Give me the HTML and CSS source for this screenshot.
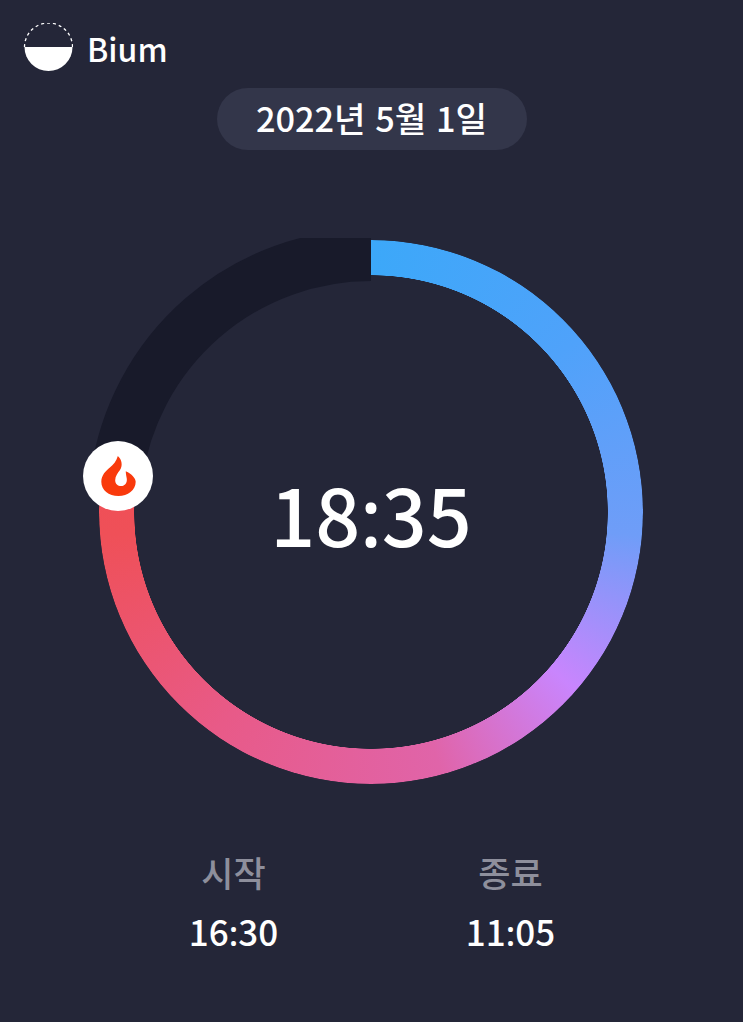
FILE: index.html
```html
<!DOCTYPE html>
<html lang="ko">
<head>
  <meta charset="UTF-8" />
  <meta name="viewport" content="width=device-width, initial-scale=1.0" />
  <title>Bium</title>
  <link rel="stylesheet" href="styles.css">
</head>
<body>
  <header class="brand">
    <svg class="brand-icon" viewBox="0 0 50 50" width="50" height="50">
      <path d="M1.500 24 A24 24 0 0 1 49.500 24" fill="none" stroke="#fff" stroke-width="1.300" stroke-dasharray="3 3" />
      <path d="M1.500 24 H49.500 A24 24 0 0 1 1.500 24 Z" fill="#fff" />
    </svg>
    <span class="brand-name">Bium</span>
  </header>

  <div class="date-row">
    <div class="date-pill">2022년 5월 1일</div>
  </div>

  <div class="dial">
    <svg class="dial-track" viewBox="-20 -2 300 300" width="300" height="300">
      <path d="M17.500 236 A257 257 0 0 1 272 15" fill="none" stroke="#181a2a" stroke-width="52" />
    </svg>
    <div class="dial-ring"></div>
    <div class="dial-time"><span>18<span class="colon">:</span>35</span></div>
    <div class="dial-knob">
      <svg viewBox="18 27 104 121" width="35" height="40">
        <path fill="#f93a0c" d="M68 27 C80 38 84 56 74 70 C68 78 60 88 60 100 C60 111 68 118 78 118 C89 118 97 108 95 95 C94 88 92 80 92 73 C110 80 122 95 122 105 C122 130 98 148 70 148 C40 148 18 130 18 105 C18 85 32 72 44 62 C54 54 64 42 68 27 Z" />
      </svg>
    </div>
  </div>

  <div class="times">
    <div class="time-col">
      <div class="time-label">시작</div>
      <div class="time-value">16<span class="colon">:</span>30</div>
    </div>
    <div class="time-col">
      <div class="time-label">종료</div>
      <div class="time-value">11<span class="colon">:</span>05</div>
    </div>
  </div>
</body>
</html>
```

FILE: styles.css
```css
html, body { height: 100%; }
body {
  margin: 0;
  overflow: hidden;
  background: #242638;
  color: #fff;
  font-family: "Noto Sans CJK KR", "Noto Sans", sans-serif;
}

/* the CJK font lifts a colon between digits, the latin one doesn't */
.colon { font-family: "Noto Sans", sans-serif; }

.brand {
  display: flex;
  align-items: center;
  gap: 14px;
  padding: 23px 0 0 23px;
  height: 50px;
}
.brand-name { font-size: 32px; font-weight: 500; }

.date-row {
  display: flex;
  justify-content: center;
  margin-top: 15px;
}
.date-pill {
  width: 310px;
  height: 62px;
  line-height: 59px;
  border-radius: 31px;
  background: #33364a;
  font-size: 34.300px;
  font-weight: 500;
  text-align: center;
}

.dial {
  position: relative;
  width: 544px;
  height: 544px;
  margin: 90px 0 0 99px;
}
.dial-ring {
  position: absolute;
  inset: 0;
  border-radius: 50%;
  background: conic-gradient(#3ca8f9 0deg, #4fa2fa 50deg, #6f9df8 95deg, #c985fd 131deg, #e064a9 165deg, #e85a88 215deg, #ef5058 265deg, #f04f56 278deg, transparent 278deg);
  -webkit-mask: radial-gradient(circle, transparent 236.500px, #000 237px);
  mask: radial-gradient(circle, transparent 236.500px, #000 237px);
}
.dial-track {
  position: absolute;
  left: -20px;
  top: -2px;
}
.dial-time {
  position: absolute;
  inset: 0;
  display: flex;
  align-items: center;
  justify-content: center;
  font-size: 79px;
  font-weight: 500;
}
.dial-knob {
  position: absolute;
  left: -16px;
  top: 201px;
  width: 70px;
  height: 70px;
  border-radius: 50%;
  background: #fff;
  display: flex;
  align-items: center;
  justify-content: center;
}

.times {
  display: grid;
  grid-template-columns: 277px 277px;
  margin: 62px 0 0 95px;
  text-align: center;
}
.time-label {
  font-size: 35px;
  font-weight: 500;
  color: #8e8f9c;
}
.time-value {
  margin-top: 8px;
  font-size: 35px;
  font-weight: 500;
}
```
